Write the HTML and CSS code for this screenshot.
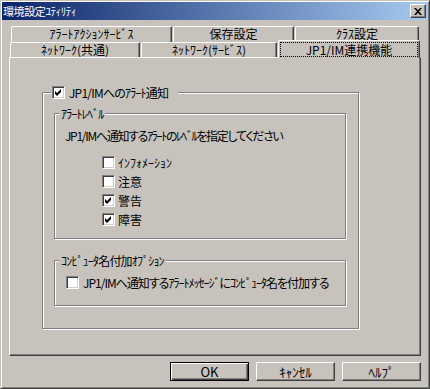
FILE: index.html
```html
<!DOCTYPE html>
<html lang="ja">
<head>
<meta charset="utf-8">
<title>環境設定ﾕﾃｨﾘﾃｨ</title>
<link rel="stylesheet" href="styles.css">
</head>
<body>
<div class="window">
  <div class="titlebar">
    <span class="title">環境設定ﾕﾃｨﾘﾃｨ</span>
    <span class="close"><svg width="8" height="7" viewBox="0 0 8 7"><path d="M0 0h2l2 2.3L6 0h2L5 3.5 8 7H6L4 4.7 2 7H0l3-3.5z" fill="#000"/></svg></span>
  </div>
  <div class="tabs">
    <div class="tabrow row1">
      <div class="tab tab-alert">ｱﾗｰﾄｱｸｼｮﾝｻｰﾋﾞｽ</div>
      <div class="tab tab-save">保存設定</div>
      <div class="tab tab-class">ｸﾗｽ設定</div>
    </div>
    <div class="tabrow row2">
      <div class="tab tab-net">ﾈｯﾄﾜｰｸ(共通)</div>
      <div class="tab tab-netsvc">ﾈｯﾄﾜｰｸ(ｻｰﾋﾞｽ)</div>
      <div class="tab tab-jp1 selected"><span class="focus">JP1/IM連携機能</span></div>
    </div>
  </div>
  <div class="panel">
    <div class="group outer">
      <div class="legend legend-check">
        <span class="cb checked"><svg width="11" height="11" viewBox="0 0 11 11"><path d="M2 4l2 2 4-4v3l-4 4-2-2z" fill="#000"/></svg></span>
        <span class="tight">JP1/IMへのｱﾗｰﾄ通知</span>
      </div>
      <div class="group level">
        <div class="legend tight">ｱﾗｰﾄﾚﾍﾞﾙ</div>
        <p class="hint">JP1/IMへ通知するｱﾗｰﾄのﾚﾍﾞﾙを指定してください</p>
        <div class="checks">
          <div class="check"><span class="cb"></span><span>ｲﾝﾌｫﾒｰｼｮﾝ</span></div>
          <div class="check"><span class="cb"></span><span>注意</span></div>
          <div class="check"><span class="cb checked"><svg width="11" height="11" viewBox="0 0 11 11"><path d="M2 4l2 2 4-4v3l-4 4-2-2z" fill="#000"/></svg></span><span>警告</span></div>
          <div class="check"><span class="cb checked"><svg width="11" height="11" viewBox="0 0 11 11"><path d="M2 4l2 2 4-4v3l-4 4-2-2z" fill="#000"/></svg></span><span>障害</span></div>
        </div>
      </div>
      <div class="group comp">
        <div class="legend tight">ｺﾝﾋﾟｭｰﾀ名付加ｵﾌﾟｼｮﾝ</div>
        <div class="check comp-check"><span class="comp-text cb"></span><span class="comp-label">JP1/IMへ通知するｱﾗｰﾄﾒｯｾｰｼﾞにｺﾝﾋﾟｭｰﾀ名を付加する</span></div>
      </div>
    </div>
  </div>
  <div class="buttons">
    <div class="btn default"><span>OK</span></div>
    <div class="btn"><span>ｷｬﾝｾﾙ</span></div>
    <div class="btn"><span>ﾍﾙﾌﾟ</span></div>
  </div>
</div>
</body>
</html>
```
FILE: styles.css
```css
* { box-sizing: border-box; }
html, body { margin: 0; padding: 0; }
body {
  width: 430px;
  height: 389px;
  overflow: hidden;
  background: #c7c3bc;
  font-family: "Noto Sans CJK JP", sans-serif;
  font-size: 12px;
  font-feature-settings: "palt";
  color: #000;
}
.tight { letter-spacing: -0.8px; }
.window {
  width: 430px;
  height: 389px;
  border: 1px solid;
  border-color: #c7c3bc #404040 #404040 #c7c3bc;
  box-shadow: inset 1px 1px #fff, inset -1px -1px #808080;
  padding: 1px;
  display: flex;
  flex-direction: column;
}
.titlebar {
  height: 18px;
  flex: none;
  display: flex;
  align-items: center;
  justify-content: space-between;
  padding: 0 2px 0 1px;
  background: linear-gradient(to right, #0a246a, #a6caf0);
  color: #fff;
}
.title { line-height: 18px; font-size: 11px; letter-spacing: -0.4px; }
.close {
  width: 16px;
  height: 14px;
  display: flex;
  align-items: center;
  justify-content: center;
  background: #c7c3bc;
  border: 1px solid;
  border-color: #fff #404040 #404040 #fff;
  box-shadow: inset -1px -1px #808080;
}
.tabs { margin-top: 6px; flex: none; }
.tabrow { display: flex; gap: 1px; }
.row1 { height: 16px; margin-left: 9px; }
.row2 { height: 15px; margin-left: 8px; }
.tab {
  border-top: 1px solid #fff;
  border-left: 1px solid #fff;
  border-right: 1px solid #404040;
  box-shadow: inset -1px 0 #808080;
  border-top-left-radius: 2px;
  border-top-right-radius: 2px;
  display: flex;
  align-items: center;
  justify-content: center;
  line-height: 12px;
  background: #c7c3bc;
}
.row1 .tab { padding-bottom: 1px; }
.tab-alert { width: 161px; }
.tab-save { width: 121px; }
.tab-class { width: 124px; }
.tab-net { width: 130px; }
.tab-netsvc { width: 136px; }
.tab-jp1 { width: 142px; }
.tab.selected {
  height: 18px;
  margin-top: -2px;
  margin-bottom: -1px;
  z-index: 2;
  align-items: flex-start;
  padding: 1px 1px 0 1px;
}
.focus {
  width: 100%;
  height: 15px;
  border: 1px dotted #000;
  display: flex;
  align-items: center;
  justify-content: center;
}
.panel {
  margin-left: 7px;
  width: 412px;
  height: 299px;
  flex: none;
  border: 1px solid;
  border-color: #fff #404040 #404040 #fff;
  box-shadow: inset -1px -1px #808080;
  padding: 34px 0 0 32px;
}
.group {
  position: relative;
  border: 1px solid #808080;
  box-shadow: inset 1px 1px #fff, 1px 1px #fff;
}
.legend {
  position: absolute;
  top: -7px;
  left: 4px;
  line-height: 13px;
  padding: 0 2px;
  background: #c7c3bc;
  white-space: nowrap;
}
.outer {
  width: 317px;
  height: 237px;
  padding: 20px 0 0 11px;
}
.legend-check {
  left: 8px;
  padding: 0 10px 0 1px;
  display: flex;
  align-items: center;
  gap: 4px;
}
.level {
  width: 292px;
  height: 126px;
  padding: 15px 0 0 10px;
}
.hint { margin: 0; line-height: 13px; letter-spacing: -1.3px; }
.checks { margin: 11px 0 0 37px; }
.check {
  height: 19px;
  display: flex;
  align-items: center;
  gap: 3px;
  white-space: nowrap;
}
.comp {
  margin-top: 21px;
  width: 292px;
  height: 46px;
  padding: 12px 0 0 11px;
}
.comp-check { gap: 4px; }
.comp-label { letter-spacing: -1px; }
.cb {
  width: 13px;
  height: 13px;
  flex: none;
  display: inline-flex;
  background: #fff;
  border: 1px solid;
  border-color: #808080 #fff #fff #808080;
  box-shadow: inset 1px 1px #404040, inset -1px -1px #d4d0c8;
}
.buttons {
  margin-top: 6px;
  display: flex;
  justify-content: flex-end;
  gap: 7px;
  padding-right: 7px;
}
.btn {
  width: 79px;
  height: 19px;
  border: 1px solid;
  border-color: #fff #404040 #404040 #fff;
  box-shadow: inset -1px -1px #808080;
  display: flex;
  align-items: center;
  justify-content: center;
  line-height: 13px;
  font-size: 13px;
}
.btn.default {
  border: 1px solid #000;
  box-shadow: inset 1px 1px #fff, inset -1px -1px #404040, inset -2px -2px #808080;
}
```
